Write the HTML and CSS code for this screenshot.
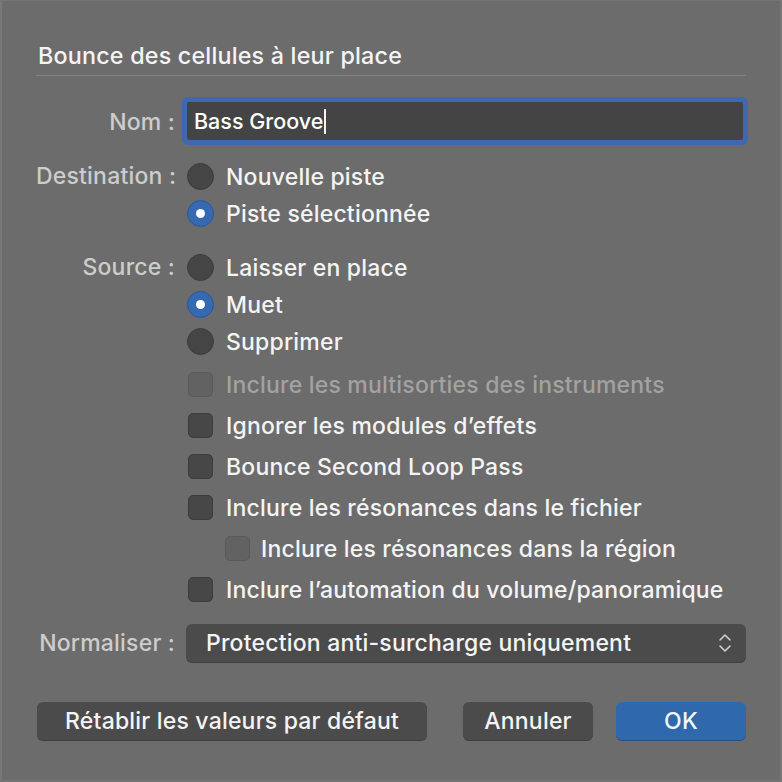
FILE: index.html
```html
<!DOCTYPE html>
<html lang="fr">
<head>
<meta charset="utf-8">
<link rel="stylesheet" href="styles.css">
</head>
<body>
<div class="dialog">
  <div class="header"><div class="title">Bounce des cellules à leur place</div></div>

  <div class="row name-row">
    <div class="label">Nom :</div>
    <div class="field"><span class="value">Bass Groove</span><span class="caret"></span></div>
  </div>

  <div class="row group dest">
    <div class="label">Destination :</div>
    <div class="opts">
      <div class="opt"><span class="radio"></span><span>Nouvelle piste</span></div>
      <div class="opt"><span class="radio on"></span><span>Piste sélectionnée</span></div>
    </div>
  </div>

  <div class="row group source">
    <div class="label">Source :</div>
    <div class="opts">
      <div class="opt"><span class="radio"></span><span>Laisser en place</span></div>
      <div class="opt"><span class="radio on"></span><span>Muet</span></div>
      <div class="opt"><span class="radio"></span><span>Supprimer</span></div>
    </div>
  </div>

  <div class="row group checks">
    <div class="label"></div>
    <div class="opts">
      <div class="chk disabled"><span class="box"></span><span>Inclure les multisorties des instruments</span></div>
      <div class="chk"><span class="box"></span><span>Ignorer les modules d’effets</span></div>
      <div class="chk"><span class="box"></span><span>Bounce Second Loop Pass</span></div>
      <div class="chk"><span class="box"></span><span>Inclure les résonances dans le fichier</span></div>
      <div class="chk sub"><span class="box dim"></span><span>Inclure les résonances dans la région</span></div>
      <div class="chk"><span class="box"></span><span>Inclure l’automation du volume/panoramique</span></div>
    </div>
  </div>

  <div class="row norm">
    <div class="label">Normaliser :</div>
    <div class="popup">
      <span>Protection anti-surcharge uniquement</span>
      <svg class="chev" width="14" height="22" viewBox="0 0 14 22"><path d="M2 8 L7 3 L12 8 M2 14 L7 19 L12 14" fill="none" stroke="#cfcfcf" stroke-width="1.6" stroke-linecap="round" stroke-linejoin="round"/></svg>
    </div>
  </div>

  <div class="buttons">
    <div class="btn reset">Rétablir les valeurs par défaut</div>
    <div class="spacer"></div>
    <div class="btn cancel">Annuler</div>
    <div class="btn ok">OK</div>
  </div>
</div>
</body>
</html>
```
FILE: styles.css
```css
html, body {
  margin: 0;
  padding: 0;
  background: #6c6c6c;
}
.dialog {
  box-sizing: border-box;
  width: 782px;
  height: 782px;
  background: #6c6c6c;
  border-left: 2px solid #787878;
  border-top: 1px solid #747474;
  border-right: 2px solid #777777;
  border-bottom: 2px solid #737373;
  padding: 0 34px 0 34px;
  font-family: Inter, "Noto Sans", sans-serif;
  font-weight: 500;
  color: #f4f4f4;
  font-size: 23px;
  letter-spacing: 0.2px;
}
.header {
  height: 75px;
  box-sizing: border-box;
  border-bottom: 1px solid #838383;
  padding-top: 41px;
}
.title {
  font-size: 23.3px;
  line-height: 28px;
  padding-left: 2px;
}
.row {
  display: grid;
  grid-template-columns: 139px 1fr;
  column-gap: 11px;
}
.label {
  text-align: right;
  color: #cdcdcd;
  height: 37px;
  line-height: 37px;
  white-space: nowrap;
}
.name-row {
  margin-top: 26px;
}
.name-row .label { height: 38px; line-height: 40px; }
.field {
  height: 38px;
  background: #444444;
  border-radius: 2px;
  box-shadow: 0 0 0 5px #3f68b0;
  display: flex;
  align-items: center;
  padding-left: 7px;
  margin-right: 3px;
  margin-left: 1px;
}
.value { color: #ffffff; font-size: 21.5px; letter-spacing: 0; }
.caret {
  display: inline-block;
  width: 2px;
  height: 25px;
  background: #f4f4f4;
  margin-left: 1px;
}
.dest { margin-top: 18px; }
.source { margin-top: 17px; }
.checks { margin-top: 4px; }
.opt, .chk {
  display: flex;
  align-items: center;
  height: 37px;
  white-space: nowrap;
}
.chk { height: 41px; }
.radio {
  box-sizing: border-box;
  width: 27px;
  height: 27px;
  border-radius: 50%;
  background: #454545;
  border: 1px solid #3b3b3b;
  margin-left: 1px;
  margin-right: 12px;
  position: relative;
  flex: none;
}
.radio.on {
  background: #3569b1;
  border-color: #2b5896;
}
.radio.on::after {
  content: "";
  position: absolute;
  left: 8px;
  top: 8px;
  width: 9px;
  height: 9px;
  border-radius: 50%;
  background: #ffffff;
}
.box {
  box-sizing: border-box;
  width: 25px;
  height: 25px;
  border-radius: 5px;
  background: #474747;
  border: 1px solid #3c3c3c;
  margin-left: 2px;
  margin-right: 13px;
  flex: none;
}
.chk.disabled { color: #a2a2a2; }
.chk.disabled .box, .box.dim {
  background: #626262;
  border-color: #5a5a5a;
}
.chk.sub { padding-left: 37px; }
.chk.sub .box { margin-right: 11px; }
.norm { margin-top: 14px; }
.norm .label { height: 38px; line-height: 38px; }
.popup {
  height: 38px;
  box-sizing: border-box;
  background: #4b4b4b;
  border-radius: 6px;
  box-shadow: 0 1px 0 #404040;
  display: flex;
  align-items: center;
  justify-content: space-between;
  padding: 0 14px 0 20px;
  white-space: nowrap;
}
.chev { display: block; }
.buttons {
  display: flex;
  margin-top: 40px;
}
.spacer { flex: 1; }
.btn {
  flex: none;
  height: 38px;
  line-height: 38px;
  background: #4b4b4b;
  border-radius: 6px;
  box-shadow: 0 1px 0 #3e3e3e;
  text-align: center;
  color: #f4f4f4;
  white-space: nowrap;
}
.reset { width: 390px; margin-left: 1px; }
.cancel { width: 130px; margin-right: 23px; }
.ok { width: 130px; background: #2f68ad; box-shadow: 0 1px 0 #274f85; }
```
